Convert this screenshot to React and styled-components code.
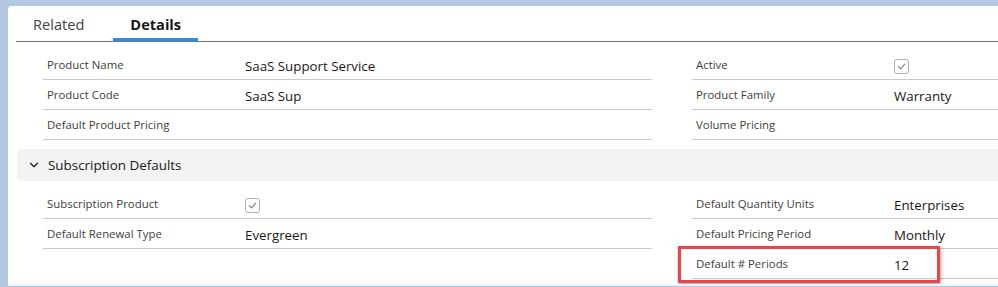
import React from "react";
import styled, { createGlobalStyle } from "styled-components";
import { ChevronDown } from "lucide-react";

const GlobalStyle = createGlobalStyle`
  html, body {
    margin: 0;
    padding: 0;
    background: #b4c7e1;
    overflow: hidden;
  }
  body {
    font-family: "Open Sans", "Noto Sans", sans-serif;
    color: #181818;
  }
`;

const Page = styled.div`
  padding: 6px 0 0 8px;
`;

const Card = styled.div`
  background: #fff;
  border-top-left-radius: 4px;
  padding: 0 0 5px 9px;
  border-bottom: 2px solid #eef5fc;
  overflow: hidden;
`;

const TabBar = styled.div`
  display: flex;
  gap: 12px;
  margin-left: -1px;
  height: 35px;
  border-bottom: 1px solid #747474;
`;

const Tab = styled.div`
  position: relative;
  padding: 0 17px;
  display: flex;
  align-items: center;
  font-size: 14.6px;
  font-weight: ${(p) => (p.$active ? 700 : 400)};
  color: ${(p) => (p.$active ? "#181818" : "#444")};
  &::after {
    content: "";
    display: ${(p) => (p.$active ? "block" : "none")};
    position: absolute;
    left: 0;
    right: 0;
    bottom: 0;
    height: 3px;
    background: #2d8ee6;
  }
`;

const Body = styled.div`
  padding-top: 8px;
`;

const Columns = styled.div`
  display: grid;
  grid-template-columns: 609px 609px;
  column-gap: 40px;
  padding-left: 26px;
  align-items: start;
`;

const Column = styled.div`
  display: flex;
  flex-direction: column;
`;

const Row = styled.div`
  position: relative;
  display: grid;
  grid-template-columns: 198px 1fr;
  align-items: center;
  height: 29px;
  padding-left: 4px;
  border-bottom: 1px solid #c9c9c9;
`;

const Label = styled.span`
  font-size: 11.4px;
  color: #3e3e3c;
`;

const Value = styled.span`
  font-size: 13.3px;
  color: #181818;
  padding-top: 2px;
`;

const Box = styled.span`
  display: inline-flex;
  align-items: center;
  justify-content: center;
  width: 13px;
  height: 13px;
  border: 1px solid #b0b0b0;
  border-radius: 3px;
  background: #fff;
`;

const Highlight = styled.span`
  position: absolute;
  left: -14px;
  top: -3px;
  width: 256px;
  height: 31px;
  border: 3px solid #ec4249;
  box-shadow: 1px 2px 4px rgba(0, 0, 0, 0.35);
  pointer-events: none;
`;

const SectionHeader = styled.div`
  display: flex;
  align-items: center;
  gap: 7px;
  height: 32px;
  margin: 9px 0 8px;
  padding-left: 10px;
  background: #f3f3f3;
  border-radius: 4px 0 0 4px;
  font-size: 13.4px;
  color: #181818;
`;

function Check() {
  return (
    <Box>
      <svg width="9" height="9" viewBox="0 0 10 10">
        <path d="M1.5 5.3 L4 7.6 L8.6 2.4" fill="none" stroke="#8c8c8c" strokeWidth="1.5" strokeLinecap="round" strokeLinejoin="round" />
      </svg>
    </Box>
  );
}

function Field({ label, value, highlight }) {
  return (
    <Row>
      <Label>{label}</Label>
      <Value>{value === true ? <Check /> : value}</Value>
      {highlight && <Highlight />}
    </Row>
  );
}

const main = {
  left: [
    { label: "Product Name", value: "SaaS Support Service" },
    { label: "Product Code", value: "SaaS Sup" },
    { label: "Default Product Pricing", value: "" },
  ],
  right: [
    { label: "Active", value: true },
    { label: "Product Family", value: "Warranty" },
    { label: "Volume Pricing", value: "" },
  ],
};

const subscription = {
  left: [
    { label: "Subscription Product", value: true },
    { label: "Default Renewal Type", value: "Evergreen" },
  ],
  right: [
    { label: "Default Quantity Units", value: "Enterprises" },
    { label: "Default Pricing Period", value: "Monthly" },
    { label: "Default # Periods", value: "12", highlight: true },
  ],
};

function Fields({ data }) {
  return (
    <Columns>
      <Column>
        {data.left.map((f) => (
          <Field key={f.label} {...f} />
        ))}
      </Column>
      <Column>
        {data.right.map((f) => (
          <Field key={f.label} {...f} />
        ))}
      </Column>
    </Columns>
  );
}

export default function App() {
  return (
    <Page>
      <GlobalStyle />
      <Card>
        <TabBar>
          <Tab>Related</Tab>
          <Tab $active>Details</Tab>
        </TabBar>
        <Body>
          <Fields data={main} />
          <SectionHeader>
            <ChevronDown size={14} strokeWidth={2} color="#181818" />
            Subscription Defaults
          </SectionHeader>
          <Fields data={subscription} />
        </Body>
      </Card>
    </Page>
  );
}
